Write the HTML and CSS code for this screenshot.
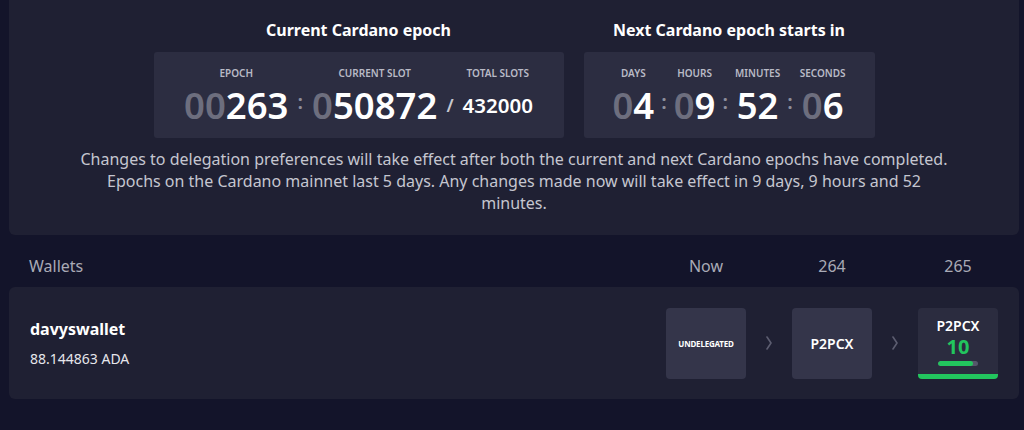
FILE: index.html
```html
<!DOCTYPE html>
<html lang="en">
<head>
<meta charset="utf-8">
<title>Cardano epoch</title>
<link rel="stylesheet" href="styles.css">
</head>
<body>
<div class="page">
  <section class="epoch-panel">
    <div class="clocks">
      <div class="clock">
        <h2 class="clock-title">Current Cardano epoch</h2>
        <div class="clock-box grid-5">
          <span class="lbl">Epoch</span><span></span><span class="lbl">Current slot</span><span></span><span class="lbl">Total slots</span>
          <span class="val"><span class="dim">00</span>263</span>
          <span class="sep">:</span>
          <span class="val"><span class="dim">0</span>50872</span>
          <span class="sep slash">/</span>
          <span class="val small">432000</span>
        </div>
      </div>
      <div class="clock">
        <h2 class="clock-title">Next Cardano epoch starts in</h2>
        <div class="clock-box grid-7">
          <span class="lbl">Days</span><span></span><span class="lbl">Hours</span><span></span><span class="lbl">Minutes</span><span></span><span class="lbl">Seconds</span>
          <span class="val"><span class="dim">0</span>4</span>
          <span class="sep">:</span>
          <span class="val"><span class="dim">0</span>9</span>
          <span class="sep">:</span>
          <span class="val">52</span>
          <span class="sep">:</span>
          <span class="val"><span class="dim">0</span>6</span>
        </div>
      </div>
    </div>
    <p class="note">Changes to delegation preferences will take effect after both the current and next Cardano epochs have completed. Epochs on the Cardano mainnet last 5 days. Any changes made now will take effect in 9 days, 9 hours and 52 minutes.</p>
  </section>

  <div class="wallet-head">
    <span class="wh-title">Wallets</span>
    <div class="cols">
      <span class="col">Now</span>
      <span class="col">264</span>
      <span class="col">265</span>
    </div>
  </div>

  <div class="wallet-card">
    <div class="wallet-info">
      <div class="wallet-name">davyswallet</div>
      <div class="wallet-amt">88.144863 ADA</div>
    </div>
    <div class="cols">
      <div class="pool undelegated">UNDELEGATED</div>
      <svg class="chev" viewBox="0 0 6 14" width="6" height="14"><path d="M1 1 L5 7 L1 13" fill="none" stroke="#5c5d70" stroke-width="1.6" stroke-linecap="round" stroke-linejoin="round"/></svg>
      <div class="pool">P2PCX</div>
      <svg class="chev" viewBox="0 0 6 14" width="6" height="14"><path d="M1 1 L5 7 L1 13" fill="none" stroke="#5c5d70" stroke-width="1.6" stroke-linecap="round" stroke-linejoin="round"/></svg>
      <div class="pool next">
        <span class="pool-name">P2PCX</span>
        <span class="pool-num">10</span>
        <span class="bar"><span class="bar-fill" style="width:88%"></span></span>
      </div>
    </div>
  </div>
</div>
</body>
</html>
```

FILE: styles.css
```css
html, body {
  margin: 0;
  padding: 0;
  background: #13142a;
  font-family: "Noto Sans", "Open Sans", sans-serif;
  color: #ffffff;
}

.page {
  padding: 0 5px 0 9px;
}

.epoch-panel {
  background: #1f2033;
  border-radius: 0 0 6px 6px;
  height: 235px;
  box-sizing: border-box;
  padding-top: 20px;
}

.clocks {
  display: flex;
  justify-content: center;
  gap: 20px;
}

.clock {
  display: flex;
  flex-direction: column;
  align-items: center;
}

.clock-title {
  margin: 0 0 12px;
  font-size: 16px;
  line-height: 20px;
  font-weight: 700;
}

.clock-box {
  background: #2c2d41;
  border-radius: 3px;
  padding: 13px 30px 10px;
  display: grid;
  align-items: center;
  justify-items: center;
  column-gap: 8px;
  height: 86px;
  box-sizing: border-box;
}

.grid-5 { grid-template-columns: auto auto auto auto auto; width: 410px; }
.grid-7 {
  grid-template-columns: auto auto auto auto auto auto auto;
  width: 291px;
  padding-left: 0;
  padding-right: 0;
  column-gap: 7px;
  justify-content: center;
}

.lbl {
  font-size: 10px;
  font-weight: 600;
  text-transform: uppercase;
  color: #b9bac6;
  line-height: 16px;
}

.val {
  font-size: 36.5px;
  font-weight: 600;
  line-height: 46px;
  color: #ffffff;
}

.val.small {
  font-size: 20.5px;
}

.dim {
  color: #6d6e7e;
}

.sep {
  font-size: 20px;
  color: #8d8e9c;
  font-weight: 600;
  line-height: 46px;
  position: relative;
  top: -3px;
}

.sep.slash {
  font-size: 18px;
  color: #c6c7d0;
  top: 0;
}

.note {
  margin: 10px auto 0;
  width: 876px;
  text-align: center;
  font-size: 16px;
  line-height: 22px;
  color: #c5c6d0;
}

.wallet-head {
  display: flex;
  justify-content: space-between;
  align-items: center;
  padding: 20px 21px 10px 20px;
  font-size: 16px;
  line-height: 22px;
  color: #a9aab6;
}

.cols {
  display: flex;
  gap: 20px;
  align-items: center;
}

.wallet-head .cols { gap: 46px; }

.col {
  width: 80px;
  text-align: center;
}

.wallet-card {
  background: #1f2033;
  border-radius: 6px;
  height: 112px;
  display: flex;
  justify-content: space-between;
  align-items: center;
  padding: 0 21px;
}

.wallet-name {
  font-size: 16px;
  font-weight: 700;
  line-height: 22px;
  margin-bottom: 9px;
}

.wallet-amt {
  font-size: 14px;
  line-height: 20px;
  color: #e6e6ec;
}

.pool {
  width: 80px;
  height: 71px;
  background: #34354a;
  border-radius: 4px;
  display: flex;
  align-items: center;
  justify-content: center;
  font-size: 14px;
  font-weight: 600;
}

.pool.undelegated {
  font-size: 8px;
  font-weight: 700;
  letter-spacing: -0.2px;
}

.pool.next {
  background: #2b2c3f;
  flex-direction: column;
  justify-content: flex-start;
  padding-top: 9px;
  box-sizing: border-box;
  border-bottom: 5px solid #22c55e;
  border-radius: 4px;
}

.pool-name {
  font-size: 14px;
  line-height: 18px;
}

.pool-num {
  font-size: 20px;
  font-weight: 700;
  color: #22c55e;
  line-height: 24px;
}

.bar {
  width: 40px;
  height: 5px;
  background: #55566a;
  border-radius: 3px;
  display: block;
  margin-top: 2px;
  overflow: hidden;
}

.bar-fill {
  display: block;
  height: 100%;
  background: #22c55e;
  border-radius: 3px;
}

.chev {
  display: block;
}
```
